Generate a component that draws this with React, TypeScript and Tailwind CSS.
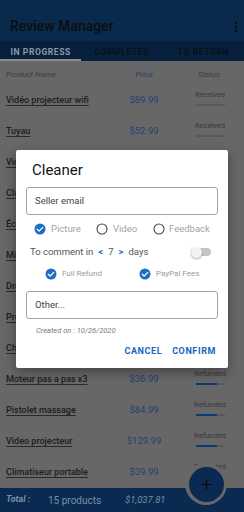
import React from "react";

type Row = { name: string; price: string; status: string; fill: number };

const rows: Row[] = [
  { name: "Vidéo projecteur wifi", price: "$89.99", status: "Received", fill: 0 },
  { name: "Tuyau", price: "$52.99", status: "Received", fill: 0 },
  { name: "Vidéo surveillance", price: "$45.99", status: "Received", fill: 0 },
  { name: "Clavier mécanique", price: "$59.99", status: "Received", fill: 0 },
  { name: "Écouteurs bluetooth", price: "$29.99", status: "Received", fill: 0 },
  { name: "Micro USB", price: "$24.99", status: "Received", fill: 0 },
  { name: "Drone caméra", price: "$99.99", status: "Received", fill: 0 },
  { name: "Projecteur LED", price: "$49.99", status: "Refunded", fill: 75 },
  { name: "Chargeur rapide", price: "$19.99", status: "Refunded", fill: 75 },
  { name: "Moteur pas a pas x3", price: "$36.99", status: "Refunded", fill: 75 },
  { name: "Pistolet massage", price: "$84.99", status: "Refunded", fill: 75 },
  { name: "Video projecteur", price: "$129.99", status: "Refunded", fill: 75 },
  { name: "Climatiseur portable", price: "$39.99", status: "Refunded", fill: 75 },
];

function CheckCircle() {
  return (
    <svg width="12" height="12" viewBox="0 0 24 24" className="shrink-0">
      <circle cx="12" cy="12" r="11" fill="#1a6ec6" />
      <path d="M6.5 12.5l3.8 3.8L17.5 8.8" fill="none" stroke="#fff" strokeWidth="2.6" strokeLinecap="round" strokeLinejoin="round" />
    </svg>
  );
}

function Radio() {
  return (
    <svg width="12" height="12" viewBox="0 0 24 24" className="shrink-0">
      <circle cx="12" cy="12" r="10" fill="none" stroke="#474747" strokeWidth="2.2" />
    </svg>
  );
}

export default function App() {
  return (
    <div className="relative w-[244px] h-[512px] overflow-hidden bg-[#676767] font-['Roboto',sans-serif] flex flex-col">
      {/* App bar */}
      <div className="h-[41px] bg-[#0a2a4d] flex items-end justify-between pl-[10px] pr-[6px] pb-[8px] shrink-0">
        <span className="text-[14px] font-medium text-[#0d0d0d] leading-none">Review Manager</span>
        <svg width="4" height="12" viewBox="0 0 4 12">
          <circle cx="2" cy="2" r="1.2" fill="#0d0d0d" />
          <circle cx="2" cy="6" r="1.2" fill="#0d0d0d" />
          <circle cx="2" cy="10" r="1.2" fill="#0d0d0d" />
        </svg>
      </div>
      {/* Tabs */}
      <div className="h-[20px] bg-[#07203d] grid grid-cols-3 shrink-0">
        <div className="flex flex-col items-center justify-between">
          <span className="text-[8.5px] font-bold tracking-[0.6px] text-[#8c99a6] leading-none mt-[7px]">IN PROGRESS</span>
          <div className="h-[2px] w-full bg-[#8a8a8a]" />
        </div>
        <div className="flex items-start justify-center">
          <span className="text-[8.5px] font-bold tracking-[0.6px] text-[#0b1017] leading-none mt-[7px]">COMPLETED</span>
        </div>
        <div className="flex items-start justify-center">
          <span className="text-[8.5px] font-bold tracking-[0.6px] text-[#0b1017] leading-none mt-[7px]">TO RETURN</span>
        </div>
      </div>
      {/* List */}
      <div className="flex-1 overflow-hidden">
        <div className="h-[24px] flex items-center pt-[4px] pl-[6px] pr-[6px] text-[8px] italic">
          <span className="w-[113px] text-[#3c3c3c]">Product Name</span>
          <span className="w-[50px] text-center text-[#1f3d66]">Price</span>
          <span className="flex-1 text-center text-[#3c3c3c] pl-[11px]">Status</span>
        </div>
        {rows.map((r, i) => (
          <div key={i} className="h-[31px] flex items-center pl-[6px] pr-[6px]">
            <span className="w-[113px] text-[9px] font-medium text-[#1c1c1c] underline underline-offset-2 decoration-[#2a2a2a] whitespace-nowrap">
              {r.name}
            </span>
            <span className="w-[50px] text-center text-[9.5px] text-[#1f4270]">{r.price}</span>
            <div className="flex-1 flex flex-col items-center pl-[13px] -mt-[4px]">
              <span className="text-[7.5px] text-[#3a3a3a] leading-none">{r.status}</span>
              <div className="mt-[5px] w-[29px] h-[2px] bg-[#585858] flex">
                <div className="h-full bg-[#0a3b73]" style={{ width: `${r.fill}%` }} />
              </div>
            </div>
          </div>
        ))}
      </div>
      {/* Bottom bar */}
      <div className="h-[24px] bg-[#0a2a52] flex items-center pl-[6px] shrink-0">
        <span className="w-[42px] text-[9px] font-bold italic text-[#7b8ea5]">Total :</span>
        <span className="w-[77px] text-[10px] text-[#7b8ea5]">15 products</span>
        <span className="text-[9.5px] italic text-[#7b8ea5]">$1,037.81</span>
      </div>

      {/* FAB notch + FAB */}
      <div className="absolute left-[185px] top-[463px] w-[42px] h-[42px] rounded-full bg-[#676767]" />
      <div className="absolute left-[189px] top-[467px] w-[35px] h-[35px] rounded-full bg-[#0a2a52] flex items-center justify-center">
        <svg width="11" height="11" viewBox="0 0 11 11">
          <path d="M5.5 0.5v10M0.5 5.5h10" stroke="#0a0a0a" strokeWidth="1.2" />
        </svg>
      </div>

      {/* Dialog */}
      <div className="absolute left-[16px] top-[150px] w-[212px] h-[218px] bg-white rounded-[2px] shadow-[0_4px_12px_rgba(0,0,0,0.35)] flex flex-col px-[10px]">
        <div className="pl-[6px] pt-[11px] h-[37px] text-[15px] text-[#141414] leading-none flex items-start">
          <span className="mt-[2px]">Cleaner</span>
        </div>
        <div className="h-[28px] border border-[#a3a3a3] rounded-[3px] flex items-center pl-[8px] text-[9.5px] text-[#444]">
          Seller email
        </div>
        <div className="h-[28px] flex items-center pl-[8px] text-[9.5px]">
          <div className="flex items-center gap-[5px] w-[62px]">
            <CheckCircle />
            <span className="text-[#a3a3a3]">Picture</span>
          </div>
          <div className="flex items-center gap-[5px] w-[57px]">
            <Radio />
            <span className="text-[#a3a3a3]">Video</span>
          </div>
          <div className="flex items-center gap-[4px]">
            <Radio />
            <span className="text-[#a3a3a3]">Feedback</span>
          </div>
        </div>
        <div className="h-[18px] flex items-center pl-[4px] text-[9.5px] text-[#555]">
          <span>To comment in</span>
          <span className="ml-[5px] text-[#1565c0] font-bold">&lt;</span>
          <span className="ml-[5px]">7</span>
          <span className="ml-[5px] text-[#1565c0] font-bold">&gt;</span>
          <span className="ml-[5px]">days</span>
          <div className="ml-auto mr-[7px] relative w-[20px] h-[12px] flex items-center">
            <div className="w-[20px] h-[8px] rounded-full bg-[#c4c4c4]" />
            <div className="absolute left-0 top-[0.5px] w-[11px] h-[11px] rounded-full bg-[#f2f2f2] shadow-[0_1px_2px_rgba(0,0,0,0.35)]" />
          </div>
        </div>
        <div className="h-[30px] flex items-center pl-[19px] pb-[4px] text-[8px] text-[#9a9a9a]">
          <div className="flex items-center gap-[5px] w-[94px]">
            <CheckCircle />
            <span>Full Refund</span>
          </div>
          <div className="flex items-center gap-[5px]">
            <CheckCircle />
            <span>PayPal Fees</span>
          </div>
        </div>
        <div className="h-[28px] border border-[#a3a3a3] rounded-[3px] flex items-center pl-[8px] text-[9.5px] text-[#444]">
          Other...
        </div>
        <div className="h-[24px] flex items-center pl-[10px] text-[7.5px] italic text-[#7a7a7a]">
          Created on : 10/26/2020
        </div>
        <div className="h-[17px] flex items-center justify-end gap-[10px] pr-[2px] text-[9px] font-bold tracking-[0.6px] text-[#1565c0]">
          <span>CANCEL</span>
          <span>CONFIRM</span>
        </div>
      </div>
    </div>
  );
}
